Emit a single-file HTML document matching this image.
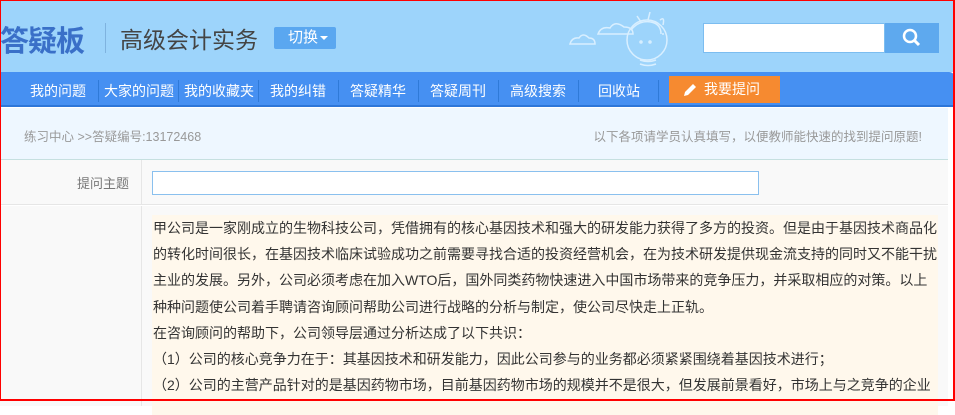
<!DOCTYPE html>
<html><head><meta charset="utf-8"><style>
*{margin:0;padding:0;box-sizing:border-box}
body{width:955px;height:401px;overflow:hidden;background:#fff;font-family:"Liberation Sans","Noto Sans CJK SC",sans-serif;position:relative}
.frame{position:absolute;left:0;top:0;width:955px;height:401px;border:1px solid #f00;border-bottom:2px solid #f00;border-right:2px solid #f00;z-index:10;pointer-events:none}
.hdr{position:absolute;left:0;top:0;width:955px;height:72px;background:#9dd4fb}
.logo{position:absolute;left:0;top:18px;font-size:29px;font-weight:bold;color:#3a70c8;letter-spacing:-1px}
.sep{position:absolute;left:105px;top:23px;width:1px;height:30px;background:#7fb3df}
.title{position:absolute;left:120px;top:21px;font-size:23px;color:#444}
.sw{position:absolute;left:274px;top:27px;width:62px;height:22px;background:#5aa7f0;border-radius:2px;color:#fff;font-size:15px;line-height:22px;padding-left:14px}
.sw:after{content:"";position:absolute;right:8px;top:9px;border:4px solid transparent;border-top:4px solid #fff}
.search{position:absolute;left:703px;top:23px;width:182px;height:30px;background:#fff;border:1px solid #7cbdf0}
.sbtn{position:absolute;left:885px;top:23px;width:54px;height:30px;background:#5ea9ee}
.nav{position:absolute;left:0;top:72px;width:955px;height:35px;background:#4690f2;border-bottom:2px solid #2d76d8;border-top-right-radius:6px}
.nav span{position:absolute;top:9px;color:#fff;font-size:14px}
.nav i{position:absolute;top:8px;width:1px;height:22px;background:#2f7ad8}
.ask{position:absolute;left:669px;top:76px;width:111px;height:27px;background:#f68a30;color:#fff;font-size:14px;line-height:27px;padding-left:35px}
.bc{position:absolute;left:0;top:108px;width:948px;height:52px;background:#eef7ff;border-bottom:1px solid #c6e0e0;font-size:12.5px;color:#999}
.row1{position:absolute;left:0;top:160px;width:948px;height:45px;background:#f9f9f9;border-bottom:1px solid #e6e6e6}
.lab{position:absolute;left:0;top:0;width:142px;height:100%;border-right:1px solid #e6e6e6;text-align:right;padding-right:12px;font-size:13px;color:#777;line-height:48px}
.inp{position:absolute;left:152px;top:11px;width:607px;height:24px;background:#fff;border:1px solid #8ac0ee}
.row2{position:absolute;left:0;top:206px;width:948px;height:200px;background:#f9f9f9}
.row2 .lab{line-height:normal}
.txt{position:absolute;left:152px;top:9px;width:786px;height:200px;background:#fff8ec;font-size:14px;color:#333;line-height:26.2px;padding:0 0 0 1px}
</style></head><body>
<div class="hdr">
<div class="logo">答疑板</div><div class="sep"></div>
<div class="title">高级会计实务</div>
<div class="sw">切换</div>
<svg style="position:absolute;left:545px;top:8px" width="170" height="60" viewBox="0 0 170 60" fill="none" stroke="#d9efff" stroke-width="1.5">
<path d="M25 36 q2-7 9-6 q4-6 10 0 q6 0 6 6 z"/><path d="M53 26 q3-8 12-6 q5-8 14-1 q9 0 9 7 z"/>
<circle cx="102" cy="32" r="20"/><path d="M86 22 q8-10 20-8 q10 2 10 12"/><path d="M95 52 q8 3 16 0 M95 56 q8 3 16 0"/><path d="M115 12 q5-4 3 5 M118 25 v2"/><circle cx="96" cy="34" r="1"/><circle cx="105" cy="34" r="1"/><path d="M92 8 l4 6 M105 4 l-2 8"/>
</svg>
<div class="search"></div>
<div class="sbtn"><svg width="54" height="30"><circle cx="25" cy="13" r="6" stroke="#fff" stroke-width="2.5" fill="none"/><path d="M29 17 l5 5" stroke="#fff" stroke-width="3"/></svg></div>
</div>
<div class="nav">
<span style="left:30px">我的问题</span><i style="left:98px"></i>
<span style="left:104px">大家的问题</span><i style="left:178px"></i>
<span style="left:184px">我的收藏夹</span><i style="left:258px"></i>
<span style="left:270px">我的纠错</span><i style="left:338px"></i>
<span style="left:350px">答疑精华</span><i style="left:418px"></i>
<span style="left:430px">答疑周刊</span><i style="left:498px"></i>
<span style="left:510px">高级搜索</span><i style="left:578px"></i>
<span style="left:598px">回收站</span><i style="left:658px"></i>
</div>
<div class="ask"><svg style="position:absolute;left:13px;top:6px" width="16" height="16"><path d="M2 14 l1-4 l8-8 l3 3 l-8 8 z" fill="#fff"/></svg>我要提问</div>
<div class="bc"><span style="position:absolute;left:24px;top:18px">练习中心 &gt;&gt;答疑编号:13172468</span><span style="position:absolute;right:26px;top:18px">以下各项请学员认真填写，以便教师能快速的找到提问原题!</span></div>
<div class="row1"><div class="lab">提问主题</div><div class="inp"></div></div>
<div class="row2"><div class="lab"></div><div class="txt">甲公司是一家刚成立的生物科技公司，凭借拥有的核心基因技术和强大的研发能力获得了多方的投资。但是由于基因技术商品化<br>的转化时间很长，在基因技术临床试验成功之前需要寻找合适的投资经营机会，在为技术研发提供现金流支持的同时又不能干扰<br>主业的发展。另外，公司必须考虑在加入WTO后，国外同类药物快速进入中国市场带来的竞争压力，并采取相应的对策。以上<br>种种问题使公司着手聘请咨询顾问帮助公司进行战略的分析与制定，使公司尽快走上正轨。<br>在咨询顾问的帮助下，公司领导层通过分析达成了以下共识：<br>（1）公司的核心竞争力在于：其基因技术和研发能力，因此公司参与的业务都必须紧紧围绕着基因技术进行；<br>（2）公司的主营产品针对的是基因药物市场，目前基因药物市场的规模并不是很大，但发展前景看好，市场上与之竞争的企业</div></div>
<div class="frame"></div>
</body></html>
